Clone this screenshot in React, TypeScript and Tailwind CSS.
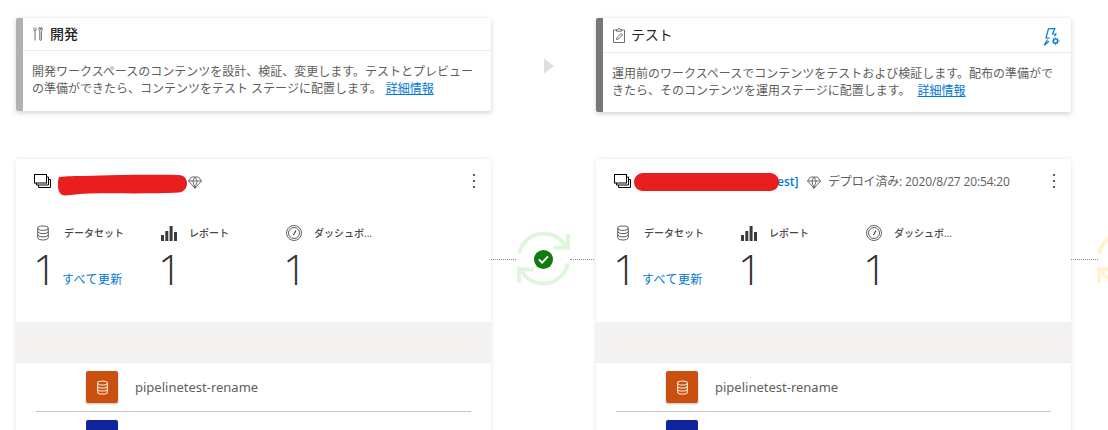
import React from "react";

const FONT = "font-['Open_Sans','Noto_Sans_CJK_JP',sans-serif]";

function Db({ className = "", sw = 1 }: { className?: string; sw?: number }) {
  return (
    <svg viewBox="0 0 16 18" className={className} fill="none" stroke="currentColor" strokeWidth={sw}>
      <ellipse cx="8" cy="3.5" rx="6" ry="2.5" />
      <path d="M2 3.5v11c0 1.400 2.700 2.500 6 2.500s6-1.100 6-2.500v-11M2 7.200c0 1.400 2.700 2.500 6 2.500s6-1.100 6-2.500M2 10.900c0 1.400 2.700 2.500 6 2.500s6-1.100 6-2.500" />
    </svg>
  );
}

function Bars() {
  return (
    <svg viewBox="0 0 16 15" className="w-4 h-[15px] text-[#3b3a39]" fill="currentColor">
      <rect x="0" y="9" width="3" height="6" />
      <rect x="4.300" y="5" width="3" height="10" />
      <rect x="8.600" y="0" width="3" height="15" />
      <rect x="13" y="6" width="3" height="9" />
    </svg>
  );
}

function Gauge() {
  return (
    <svg viewBox="0 0 16 16" className="w-4 h-4 text-[#3b3a39]" fill="none" stroke="currentColor" strokeWidth="0.8">
      <circle cx="8" cy="8" r="7.500" />
      <circle cx="8" cy="8" r="5.500" />
      <path d="M7.400 10l2.600-4.600" strokeWidth="1.100" />
    </svg>
  );
}

function Diamond() {
  return (
    <svg viewBox="0 0 14 13" className="w-[14px] h-[13px] text-[#605e5c] shrink-0" fill="none" stroke="currentColor" strokeWidth="0.9">
      <path d="M3.500 1h7L13.500 5 7 12.300.5 5zM.5 5h13M4.800 5L7 12.300 9.200 5 7 1 4.800 5z" />
    </svg>
  );
}

function Stack() {
  return (
    <svg viewBox="0 0 17 14" className="w-[17px] h-[14px] text-black shrink-0" fill="none" stroke="currentColor" strokeWidth="1">
      <rect x="0.5" y="0.5" width="12" height="8.500" fill="white" />
      <path d="M12.500 3h2v8h-12V9M14.500 5.500h2v8h-12v-2.500" />
    </svg>
  );
}

function Tools() {
  return (
    <svg viewBox="0 0 10 14" className="w-[10px] h-[14px] text-[#605e5c]" fill="none" stroke="currentColor" strokeWidth="0.9">
      <path d="M1 .5v2.200c0 .6.400 1 1 1s1-.4 1-1V.5M2 3.700V13.500M7 .5c-.9.300-1.300 1-1.300 1.800S6.200 3.700 6.800 4v8.500a.8.800 0 0 0 1.600 0V4c.6-.3 1-.9 1-1.700S8.900.8 8 .5v2H7z" />
    </svg>
  );
}

function Clip() {
  return (
    <svg viewBox="0 0 12 15" className="w-3 h-[15px] text-[#605e5c]" fill="none" stroke="currentColor" strokeWidth="0.9">
      <path d="M3.500 2H.5v12.500h11V2h-3M3.500 3.200h5V1.600H7.200a1.200 1.200 0 0 0-2.400 0H3.500zM3.500 11.500l.5-2 4-4 1.500 1.500-4 4z" />
    </svg>
  );
}

function Bolt() {
  return (
    <svg viewBox="0 0 17 18" className="w-[17px] h-[18px] text-[#0078d4]" fill="none" stroke="currentColor" strokeWidth="1.200">
      <path d="M5.500 .6h6.300L9.500 6h3.500l-1.600 2.200M6.800 10H3L5.500 .6M4.500 11.500L1.200 17.200 6 13.200" />
      <circle cx="12.500" cy="13" r="2" />
      <path d="M12.500 9.500v1.500M12.500 15v1.800M9 13h1.500M14.500 13h2M10 10.500l1 1M14 14.500l1 1M15 10.500l-1 1M11 14.500l-1 1" />
    </svg>
  );
}

function Cycle({ color, className = "" }: { color: string; className?: string }) {
  return (
    <svg viewBox="0 0 56 56" className={className} fill="none" stroke={color} strokeWidth="4">
      <path d="M3 23C6 11 16 2.500 28 2.500c9 0 17 4.500 22 12" />
      <path d="M53 3v14H38" />
      <path d="M53 33c-3 12-13 20.500-25 20.500-9 0-17-4.500-22-12" />
      <path d="M3 53V39h15" />
    </svg>
  );
}

function StageHeader({
  bar, icon, title, action, h, lines,
}: {
  bar: string; icon: React.ReactNode; title: string; action?: React.ReactNode; h: string; lines: React.ReactNode;
}) {
  return (
    <div className={`flex ${h} rounded-[2px] bg-white overflow-hidden shadow-[0_1.5px_5px_rgba(0,0,0,0.18)]`}>
      <div className={`w-[7px] shrink-0 ${bar}`} />
      <div className="flex-1 flex flex-col min-w-0">
        {action !== undefined ? (
          <div className="h-[35px] flex items-center border-b border-[#edebe9] pl-[10px] pr-[11px] gap-[6px]">
            {icon}
            <span className="text-[14px] leading-none text-[#252423] tracking-[-0.2px]">{title}</span>
            <span className="ml-auto mt-[3px]">{action}</span>
          </div>
        ) : (
          <div className="h-[33px] flex items-center border-b border-[#edebe9] pl-[10px] gap-[7px]">
            {icon}
            <span className="text-[14px] leading-none text-[#252423] font-medium">{title}</span>
          </div>
        )}
        <div className="pl-[9px] pt-[12px] text-[12px] leading-[17px] text-[#605e5c] whitespace-nowrap">
          {lines}
        </div>
      </div>
    </div>
  );
}

function Metric({ icon, label, link }: { icon: React.ReactNode; label: string; link?: boolean }) {
  return (
    <div className="w-[125px] shrink-0">
      <div className="flex items-center h-[16px]">
        <span className="w-[29px] flex justify-start pl-[1px]">{icon}</span>
        <span className="text-[10px] font-medium text-[#484644] leading-none mb-[1px]">{label}</span>
      </div>
      <div className="flex items-end mt-[10px] h-[36px] -ml-[2px]">
        <span className="w-[30px] text-[42px] leading-[36px] text-[#323130] font-light">1</span>
        {link && <span className="text-[12px] leading-none text-[#0078d4] tracking-[0.4px] mb-[1px] -ml-[1px]">すべて更新</span>}
      </div>
    </div>
  );
}

function WorkspaceCard({ title }: { title: React.ReactNode }) {
  return (
    <div className="mt-[48px] bg-white rounded-[2px] shadow-[0_0_5px_rgba(0,0,0,0.1)] h-[330px]">
      <div className="h-[66px] flex items-start pl-[18px] pt-[15px] pr-[12px]">
        {title}
        <div className="ml-auto flex flex-col gap-[4px] pr-[4px]">
          <span className="w-[2px] h-[2px] bg-[#605e5c]" />
          <span className="w-[2px] h-[2px] bg-[#605e5c]" />
          <span className="w-[2px] h-[2px] bg-[#605e5c]" />
        </div>
      </div>
      <div className="flex pl-[19px] h-[97px]">
        <Metric label="データセット" link icon={<Db className="w-[14px] h-[16px] text-[#484644]" />} />
        <Metric label="レポート" icon={<Bars />} />
        <Metric label="ダッシュボ..." icon={<Gauge />} />
      </div>
      <div className="h-[41px] bg-[#f3f2f1] border-b border-[#edebe9]" />
      <div className="mx-[20px] h-[49px] border-b border-[#c8c6c4] pl-[50px] pt-[8px] flex items-start gap-[17px]">
        <div className="w-[32px] h-[32px] rounded-[2px] bg-[#ca5010] flex items-center justify-center shadow-[0_1px_2px_rgba(0,0,0,0.25)]">
          <Db sw={1.300} className="w-[13px] h-[15px] text-[#fbeadf]" />
        </div>
        <span className="text-[13px] leading-[32px] text-[#605e5c] font-['Noto_Sans',sans-serif]">pipelinetest-rename</span>
      </div>
      <div className="ml-[70px] mt-[8px] w-[32px] h-[32px] rounded-[2px] bg-[#12239e]" />
    </div>
  );
}

export default function App() {
  return (
    <div className={`relative w-[1108px] h-[430px] overflow-hidden bg-white ${FONT}`}>
      <div className="flex pl-[16px] pt-[18px]">
        <div className="w-[475px] shrink-0">
          <StageHeader
            h="h-[93px]"
            bar="bg-[#b3b0ad]"
            icon={<Tools />}
            title="開発"
            lines={
              <>
                開発ワークスペースのコンテンツを設計、検証、変更します。テストとプレビュー
                <br />
                の準備ができたら、コンテンツをテスト ステージに配置します。
                <span className="ml-[4px] text-[#0078d4] underline">詳細情報</span>
              </>
            }
          />
          <WorkspaceCard
            title={
              <div className="flex items-start">
                <Stack />
                <span className="w-[137px] shrink-0" />
                <span className="mt-[2px]"><Diamond /></span>
              </div>
            }
          />
        </div>

        <div className="w-[105px] shrink-0 relative">
          <svg viewBox="0 0 12 18" className="absolute left-[53px] top-[39px] w-[10px] h-[18px]">
            <path d="M0 0l12 9L0 18z" fill="#e1dfdd" />
          </svg>
          <div className="absolute left-0 right-0 top-[241px] flex items-center justify-between">
            <span className="w-[25px] border-t border-dotted border-[#8a8886]" />
            <span className="w-[24px] border-t border-dotted border-[#8a8886] mr-[2px]" />
          </div>
          <Cycle color="#dff6dd" className="absolute left-[25px] top-[213px] w-[55px] h-[55px]" />
          <div className="absolute left-[43px] top-[232px] w-[19px] h-[19px] rounded-full bg-[#107c10] flex items-center justify-center">
            <svg viewBox="0 0 12 10" className="w-[11px] h-[9px]" fill="none" stroke="white" strokeWidth="2">
              <path d="M1 5l3.500 3.500L11 1.500" />
            </svg>
          </div>
        </div>

        <div className="w-[475px] shrink-0">
          <StageHeader
            h="h-[94px]"
            bar="bg-[#797775]"
            icon={<Clip />}
            title="テスト"
            action={<Bolt />}
            lines={
              <>
                運用前のワークスペースでコンテンツをテストおよび検証します。配布の準備がで
                <br />
                きたら、そのコンテンツを運用ステージに配置します。
                <span className="ml-[7px] text-[#0078d4] underline">詳細情報</span>
              </>
            }
          />
          <div className="-mt-px">
            <WorkspaceCard
              title={
                <div className="flex items-start">
                  <Stack />
                  <span className="w-[149px] shrink-0" />
                  <span className="text-[12px] leading-[16px] font-semibold text-[#0078d4] w-[20px] -ml-[3px]">est]</span>
                  <span className="ml-[10px] mt-[2px]"><Diamond /></span>
                  <span className="ml-[7px] text-[12px] leading-[16px] text-[#605e5c] tracking-[-0.15px] whitespace-nowrap">デプロイ済み: 2020/8/27 20:54:20</span>
                </div>
              }
            />
          </div>
        </div>

        <div className="w-[37px] shrink-0 relative">
          <span className="absolute left-0 w-[27px] top-[241px] border-t border-dotted border-[#8a8886]" />
          <Cycle color="#fff4ce" className="absolute left-[25px] top-[213px] w-[55px] h-[55px]" />
        </div>
      </div>

      <svg viewBox="0 0 1108 430" className="absolute inset-0 w-[1108px] h-[430px] pointer-events-none">
        <path d="M60 177c6-1 16-1 24-1 30-1 65-1.500 95-1 5 0 8 4 8 8.500s-3 8.500-8 9c-30 1.500-60 .5-90 1-8 0-16 1.500-24 2-5 0-7-5-7-9.500s0-8.500 2-9.500z" fill="#e91e1e" />
        <path d="M643 173h127c5 0 9 4 9 9s-4 9-9 9H643c-5 0-9-4-9-9s4-9 9-9z" fill="#e91e1e" />
      </svg>
    </div>
  );
}
